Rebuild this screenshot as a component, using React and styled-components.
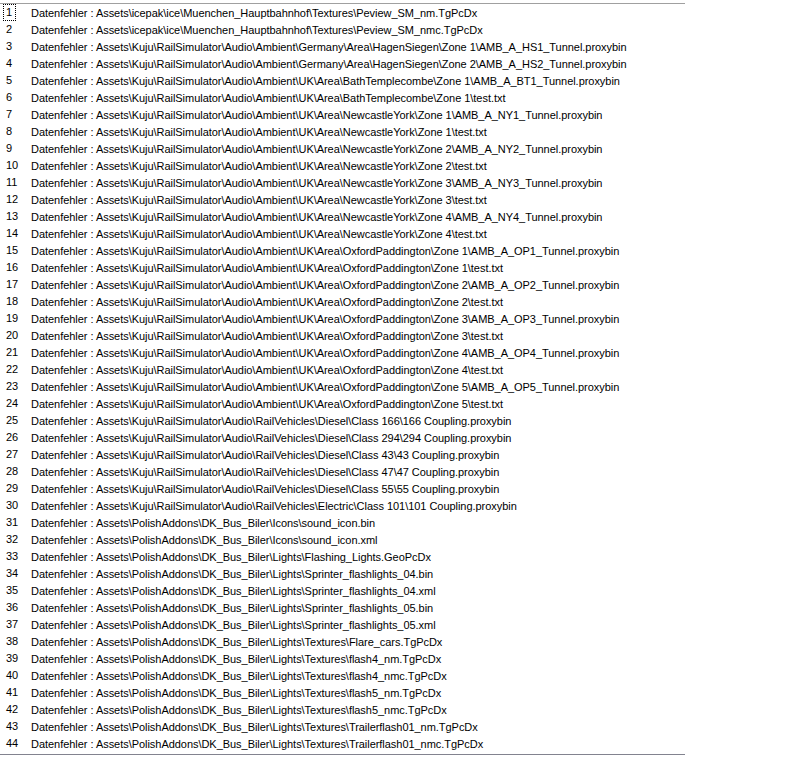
import React from 'react';
import styled, {createGlobalStyle} from 'styled-components';

const GlobalStyle = createGlobalStyle`
  html, body {
    margin: 0;
    padding: 0;
    background: #ffffff;
  }
`;

const Page = styled.div`
  width: 800px;
  height: 757px;
  padding-top: 3px;
  box-sizing: border-box;
  background: #ffffff;
`;

const List = styled.div`
  width: 685px;
  padding-bottom: 2px;
  border-top: 1px solid #a0a0a0;
  border-bottom: 1px solid #82838f;
  display: flex;
  flex-direction: column;
  font-family: 'Liberation Sans', Arial, sans-serif;
  font-size: 11px;
  letter-spacing: -0.04px;
  color: #000000;
`;

const Row = styled.div`
  height: 17px;
  display: flex;
  align-items: center;
  white-space: nowrap;
`;

const Num = styled.span`
  width: 25px;
  padding-left: 4px;
  box-sizing: border-box;
  flex: none;
  display: flex;
  align-items: center;
`;

const NumLabel = styled.span`
  display: inline-block;
  height: 15px;
  line-height: 15px;
  padding: 0 3px 0 2px;
  box-sizing: border-box;
  outline: ${(p) => (p.focused ? '1px dotted #000' : 'none')};
  outline-offset: 0;
`;

const Msg = styled.span`
  padding-left: 6px;
`;

const K = 'Assets\\Kuju\\RailSimulator\\Audio\\';
const A = K + 'Ambient\\';
const NY = A + 'UK\\Area\\NewcastleYork\\';
const OP = A + 'UK\\Area\\OxfordPaddington\\';
const D = K + 'RailVehicles\\Diesel\\';
const P = 'Assets\\PolishAddons\\DK_Bus_Biler\\';
const L = P + 'Lights\\';

const paths = [
  'Assets\\icepak\\ice\\Muenchen_Hauptbahnhof\\Textures\\Peview_SM_nm.TgPcDx',
  'Assets\\icepak\\ice\\Muenchen_Hauptbahnhof\\Textures\\Peview_SM_nmc.TgPcDx',
  A + 'Germany\\Area\\HagenSiegen\\Zone 1\\AMB_A_HS1_Tunnel.proxybin',
  A + 'Germany\\Area\\HagenSiegen\\Zone 2\\AMB_A_HS2_Tunnel.proxybin',
  A + 'UK\\Area\\BathTemplecombe\\Zone 1\\AMB_A_BT1_Tunnel.proxybin',
  A + 'UK\\Area\\BathTemplecombe\\Zone 1\\test.txt',
  NY + 'Zone 1\\AMB_A_NY1_Tunnel.proxybin',
  NY + 'Zone 1\\test.txt',
  NY + 'Zone 2\\AMB_A_NY2_Tunnel.proxybin',
  NY + 'Zone 2\\test.txt',
  NY + 'Zone 3\\AMB_A_NY3_Tunnel.proxybin',
  NY + 'Zone 3\\test.txt',
  NY + 'Zone 4\\AMB_A_NY4_Tunnel.proxybin',
  NY + 'Zone 4\\test.txt',
  OP + 'Zone 1\\AMB_A_OP1_Tunnel.proxybin',
  OP + 'Zone 1\\test.txt',
  OP + 'Zone 2\\AMB_A_OP2_Tunnel.proxybin',
  OP + 'Zone 2\\test.txt',
  OP + 'Zone 3\\AMB_A_OP3_Tunnel.proxybin',
  OP + 'Zone 3\\test.txt',
  OP + 'Zone 4\\AMB_A_OP4_Tunnel.proxybin',
  OP + 'Zone 4\\test.txt',
  OP + 'Zone 5\\AMB_A_OP5_Tunnel.proxybin',
  OP + 'Zone 5\\test.txt',
  D + 'Class 166\\166 Coupling.proxybin',
  D + 'Class 294\\294 Coupling.proxybin',
  D + 'Class 43\\43 Coupling.proxybin',
  D + 'Class 47\\47 Coupling.proxybin',
  D + 'Class 55\\55 Coupling.proxybin',
  K + 'RailVehicles\\Electric\\Class 101\\101 Coupling.proxybin',
  P + 'Icons\\sound_icon.bin',
  P + 'Icons\\sound_icon.xml',
  L + 'Flashing_Lights.GeoPcDx',
  L + 'Sprinter_flashlights_04.bin',
  L + 'Sprinter_flashlights_04.xml',
  L + 'Sprinter_flashlights_05.bin',
  L + 'Sprinter_flashlights_05.xml',
  L + 'Textures\\Flare_cars.TgPcDx',
  L + 'Textures\\flash4_nm.TgPcDx',
  L + 'Textures\\flash4_nmc.TgPcDx',
  L + 'Textures\\flash5_nm.TgPcDx',
  L + 'Textures\\flash5_nmc.TgPcDx',
  L + 'Textures\\Trailerflash01_nm.TgPcDx',
  L + 'Textures\\Trailerflash01_nmc.TgPcDx',
];

const App = () => (
  <Page>
    <GlobalStyle />
    <List>
      {paths.map((path, i) => (
        <Row key={`row-${i}`}>
          <Num>
            <NumLabel focused={i === 0}>{i + 1}</NumLabel>
          </Num>
          <Msg>Datenfehler : {path}</Msg>
        </Row>
      ))}
    </List>
  </Page>
);

export default App;
